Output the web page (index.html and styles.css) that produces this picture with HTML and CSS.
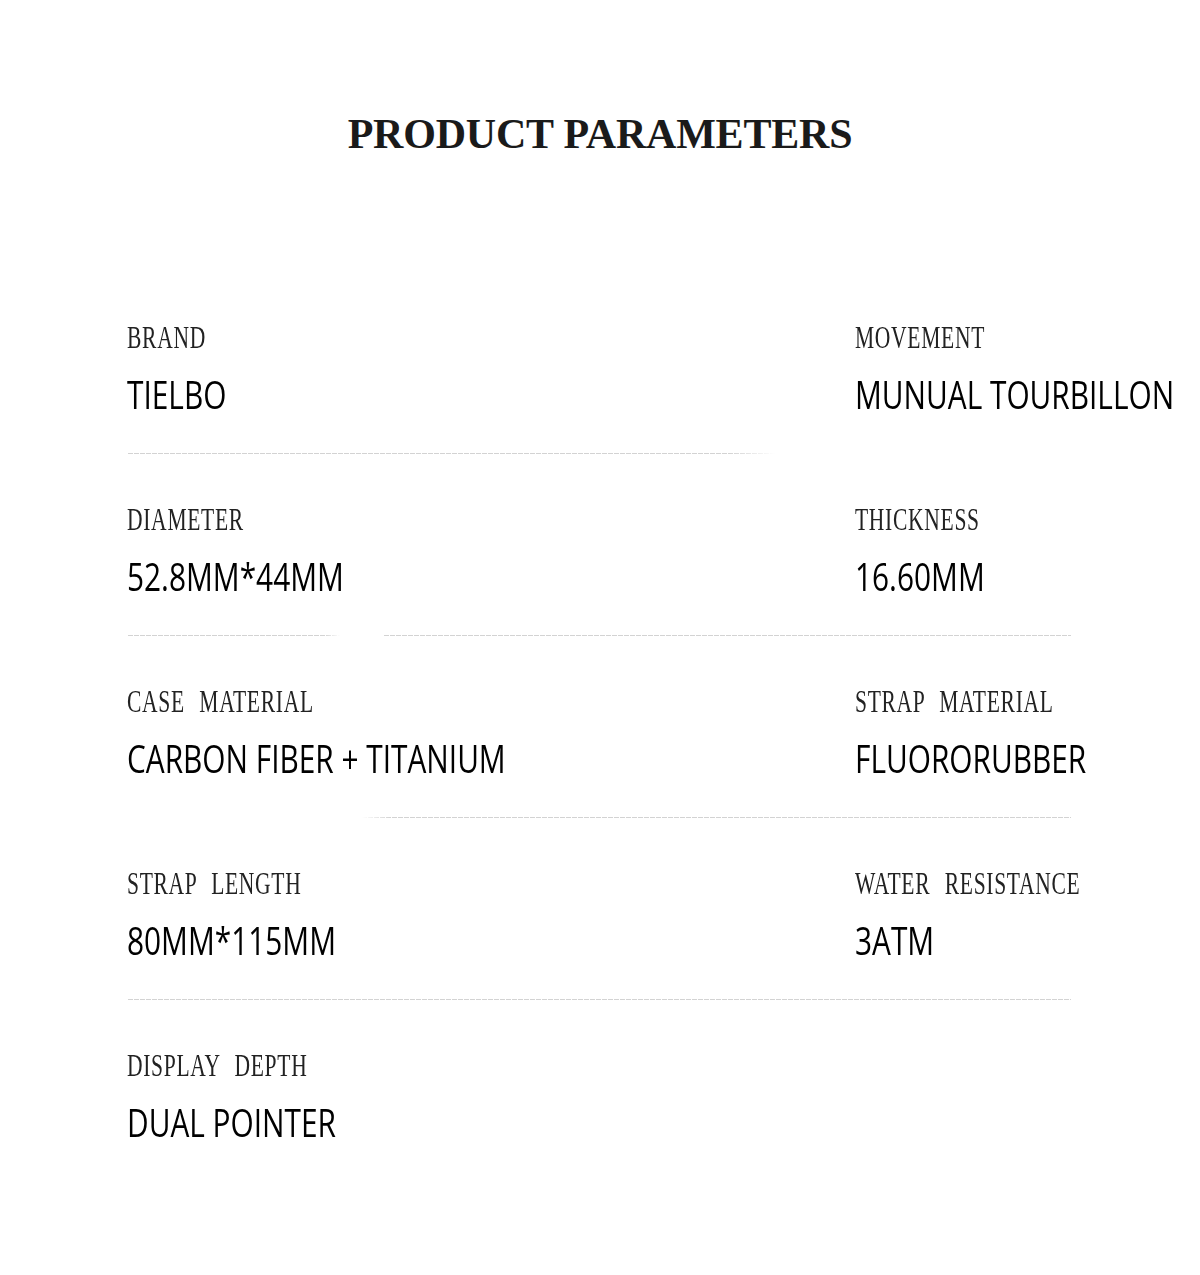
FILE: index.html
```
<!DOCTYPE html>
<html lang="en">
<head>
<meta charset="utf-8">
<title>Product Parameters</title>
<link rel="stylesheet" href="styles.css">
</head>
<body>
<main class="page">
  <h1 class="title">PRODUCT PARAMETERS</h1>

  <section class="params">
    <div class="row">
      <div class="cell">
        <div class="label"><span>BRAND</span></div>
        <div class="value"><span>TIELBO</span></div>
      </div>
      <div class="cell">
        <div class="label"><span>MOVEMENT</span></div>
        <div class="value"><span>MUNUAL TOURBILLON</span></div>
      </div>
    </div>
    <div class="divider">
      <i class="seg seg-r1 fade-end"></i>
    </div>

    <div class="row">
      <div class="cell">
        <div class="label"><span>DIAMETER</span></div>
        <div class="value"><span>52.8MM*44MM</span></div>
      </div>
      <div class="cell">
        <div class="label"><span>THICKNESS</span></div>
        <div class="value"><span>16.60MM</span></div>
      </div>
    </div>
    <div class="divider">
      <i class="seg seg-r2a fade-end"></i>
      <i class="seg seg-r2b"></i>
    </div>

    <div class="row">
      <div class="cell">
        <div class="label"><span>CASE MATERIAL</span></div>
        <div class="value"><span>CARBON FIBER + TITANIUM</span></div>
      </div>
      <div class="cell">
        <div class="label"><span>STRAP MATERIAL</span></div>
        <div class="value"><span>FLUORORUBBER</span></div>
      </div>
    </div>
    <div class="divider">
      <i class="seg seg-r3 fade-start"></i>
    </div>

    <div class="row">
      <div class="cell">
        <div class="label"><span>STRAP LENGTH</span></div>
        <div class="value"><span>80MM*115MM</span></div>
      </div>
      <div class="cell">
        <div class="label"><span>WATER RESISTANCE</span></div>
        <div class="value"><span>3ATM</span></div>
      </div>
    </div>
    <div class="divider">
      <i class="seg seg-r4"></i>
    </div>

    <div class="row">
      <div class="cell">
        <div class="label"><span>DISPLAY DEPTH</span></div>
        <div class="value"><span>DUAL POINTER</span></div>
      </div>
    </div>
  </section>
</main>
</body>
</html>
```

FILE: styles.css
```
html, body {
  margin: 0;
  padding: 0;
  background: #ffffff;
}

.page {
  width: 1200px;
  height: 1275px;
  overflow: hidden;
}

.title {
  margin: 0;
  padding-top: 113px;
  font-family: "Liberation Serif", "Times New Roman", serif;
  font-weight: 700;
  font-size: 42px;
  line-height: 43px;
  color: #1a1a1a;
  text-align: center;
  letter-spacing: -0.2px;
}

.params {
  margin-top: 165px;
}

.row {
  display: grid;
  grid-template-columns: 728px 1fr;
  padding-left: 127px;
}

.label {
  font-family: "Liberation Serif", "Times New Roman", serif;
  font-size: 31px;
  line-height: 34px;
  height: 34px;
  color: #222222;
  white-space: nowrap;
  word-spacing: 12px;
  letter-spacing: 1px;
}

.label span {
  display: inline-block;
  transform: scaleX(0.695);
  transform-origin: left center;
}

.value {
  margin-top: 20px;
  font-family: "Open Sans", "Noto Sans", sans-serif;
  font-size: 38px;
  line-height: 38px;
  height: 38px;
  color: #000000;
  white-space: nowrap;
}

.value span {
  display: inline-block;
  transform: scaleX(0.785);
  transform-origin: left center;
}

.divider {
  display: flex;
  height: 1px;
  margin-top: 40px;
  margin-bottom: 49px;
}

.seg {
  display: block;
  height: 1px;
  background: repeating-linear-gradient(to right, #d3d3d3 0 5px, transparent 5px 6px);
}

.fade-end {
  -webkit-mask-image: linear-gradient(to right, #000 93%, transparent 100%);
  mask-image: linear-gradient(to right, #000 93%, transparent 100%);
}

.fade-start {
  -webkit-mask-image: linear-gradient(to right, transparent 0, #000 4%);
  mask-image: linear-gradient(to right, transparent 0, #000 4%);
}

.seg-r1 { margin-left: 128px; width: 647px; }
.seg-r2a { margin-left: 128px; width: 212px; }
.seg-r2b { margin-left: 44px; width: 687px; }
.seg-r3 { margin-left: 362px; width: 709px; }
.seg-r4 { margin-left: 128px; width: 943px; }
```
